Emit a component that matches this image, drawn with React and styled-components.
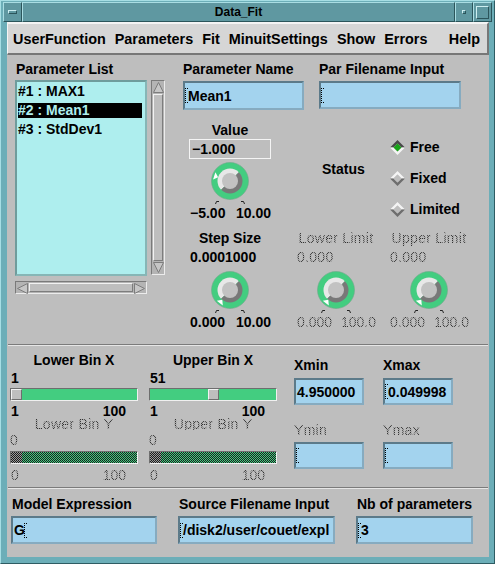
import React from 'react';
import styled, { createGlobalStyle, css } from 'styled-components';

const GRAY = '#bebebe';
const GREEN = '#43cd80';

const GlobalStyle = createGlobalStyle`
  html, body { margin: 0; padding: 0; background: ${GRAY}; }
  body { font-family: "Liberation Sans", Arial, sans-serif; color: #000; }
  * { box-sizing: border-box; }
`;

const bevel = (light, dark) => css`
  border-top: 1px solid ${light};
  border-left: 1px solid ${light};
  border-right: 1px solid ${dark};
  border-bottom: 1px solid ${dark};
`;

const Window = styled.div`
  width: 495px;
  height: 564px;
  display: flex;
  flex-direction: column;
  background: #6caeb8;
  ${bevel('#a6dee4', '#2e5c63')}
  padding: 1px 5px 6px 6px;
`;

const TitleBar = styled.div`
  display: flex;
  height: 20px;
  margin: 0 -3px 0 -4px;
`;

const FrameButton = styled.div`
  width: ${p => p.$w}px;
  height: 20px;
  display: flex;
  align-items: center;
  justify-content: center;
  background: #5f98a1;
  ${bevel('#a9dde3', '#2b555b')}
`;

const Glyph = styled.span`
  display: block;
  width: ${p => p.$w}px;
  height: ${p => p.$h}px;
  ${bevel('#cdeef1', '#2b555b')}
`;

const Title = styled.div`
  flex: 1;
  height: 20px;
  background: #5f98a1;
  ${bevel('#a9dde3', '#2b555b')}
  font-size: 12px;
  font-weight: bold;
  line-height: 18px;
  text-align: center;
`;

const Body = styled.div`
  flex: 1;
  display: flex;
  flex-direction: column;
  background: ${GRAY};
`;

const MenuBar = styled.div`
  height: 33px;
  display: flex;
  align-items: center;
  gap: 9px;
  padding: 0 7px 0 5px;
  background: #d6d6d6;
  border-top: 2px solid #f4f4f4;
  border-left: 1px solid #f4f4f4;
  border-bottom: 2px solid #777;
  border-right: 2px solid #777;
`;

const MenuItem = styled.span`
  font-size: 14.4px;
  font-weight: bold;
  margin-left: ${p => (p.$push ? 'auto' : '0')};
`;

const Section = styled.div`
  display: flex;
  height: ${p => p.$h}px;
  padding: ${p => p.$pad};
  ${p => p.$sep && css`
    border-bottom: 1px solid #7b7b7b;
    box-shadow: 0 1px 0 #e6e6e6;
    margin: 0 1px 1px;
  `}
`;

const stipple = css`
  font-weight: normal;
  color: transparent;
  background: repeating-conic-gradient(#333 0 25%, #a8a8a8 0 50%) 0 0 / 2px 2px;
  -webkit-background-clip: text;
  background-clip: text;
`;

const Label = styled.div`
  font-size: 14px;
  font-weight: bold;
  line-height: ${p => p.$lh || 16}px;
  text-align: ${p => p.$align || 'left'};
  margin-top: ${p => p.$mt || 0}px;
  padding-left: ${p => p.$pl || 0}px;
  white-space: nowrap;
  ${p => p.$disabled && css`
    letter-spacing: 0.3px;
    ${stipple}
  `}
`;

/* ---------- parameter list ---------- */

const ListColumn = styled.div`
  width: 150px;
  display: flex;
  flex-direction: column;
`;

const ListRow = styled.div`
  display: flex;
  gap: 4px;
  margin-top: 3px;
`;

const ListBox = styled.div`
  width: 132px;
  height: 196px;
  padding-top: 2px;
  background: #aeeeee;
  border: 2px solid;
  border-color: #6f9c9c #86b6b6 #86b6b6 #6f9c9c;
`;

const ListItem = styled.div`
  height: 15px;
  line-height: 15px;
  margin: 0 3px 4px 1px;
  font-size: 14px;
  font-weight: bold;
  background: ${p => (p.$selected ? '#000' : 'transparent')};
  color: ${p => (p.$selected ? '#aeeeee' : '#000')};
`;

const ScrollBar = styled.div`
  display: flex;
  flex-direction: ${p => (p.$vertical ? 'column' : 'row')};
  width: ${p => (p.$vertical ? 14 : 132)}px;
  height: ${p => (p.$vertical ? 195 : 13)}px;
  margin-top: ${p => (p.$vertical ? 0 : 5)}px;
  padding: 1px;
  gap: 1px;
  background: #b4b4b4;
  ${bevel('#7a7a7a', '#ececec')}
`;

const ScrollThumb = styled.div`
  flex: 1;
  background: ${GRAY};
  ${bevel('#f2f2f2', '#7d7d7d')}
`;

const Arrow = ({ dir }) => {
  const pts = {
    up: '5.5,0.5 10.5,10.5 0.5,10.5',
    down: '0.5,0.5 10.5,0.5 5.5,10.5',
    left: '0.5,5.5 10.5,0.5 10.5,10.5',
    right: '0.5,0.5 10.5,5.5 0.5,10.5',
  }[dir];
  return (
    <svg width="11" height="11" viewBox="0 0 11 11" style={{ flex: 'none' }}>
      <polygon points={pts} fill="#c6c6c6" stroke="#7d7d7d" strokeWidth="1" />
    </svg>
  );
};

/* ---------- editor ---------- */

const EditorColumn = styled.div`
  display: flex;
  flex-direction: column;
  margin-left: 18px;
`;

const FieldRow = styled.div`
  display: flex;
  gap: ${p => p.$gap}px;
`;

const FieldGroup = styled.div`
  display: flex;
  flex-direction: column;
`;

const Field = styled.div`
  width: ${p => p.$w}px;
  height: ${p => p.$h}px;
  margin-top: ${p => p.$mt}px;
  display: flex;
  align-items: center;
  padding-left: 1px;
  background: #a3d3ee;
  border: 2px solid;
  border-color: #5c7a89 #86abc0 #86abc0 #5c7a89;
  font-size: 14px;
  font-weight: bold;
  white-space: nowrap;
  overflow: hidden;
`;

const Caret = styled.span`
  flex: none;
  display: inline-block;
  width: 3px;
  height: 15px;
  margin-right: -1px;
  border-left: 1px dotted #000;
  border-top: 1px dotted #000;
  border-bottom: 1px dotted #000;
  transform: translateX(-1px);
`;

const DialRow = styled.div`
  display: flex;
  margin-top: ${p => p.$mt}px;
  padding-left: 6px;
`;

const DialBlockBox = styled.div`
  width: ${p => p.$w}px;
  margin-left: ${p => p.$ml}px;
  display: flex;
  flex-direction: column;
`;

const ValueBox = styled.div`
  height: 20px;
  margin-top: 1px;
  padding-left: 2px;
  border: 1px solid #f4f4f4;
  font-size: 14px;
  font-weight: bold;
  line-height: 18px;
`;

const DialHolder = styled.div`
  display: flex;
  justify-content: center;
  margin-top: ${p => p.$mt}px;
`;

const Range = styled.div`
  display: flex;
  justify-content: space-between;
  width: ${p => p.$w}px;
  margin-top: ${p => p.$mt}px;
  padding-left: 1px;
  font-size: 14px;
  font-weight: bold;
  line-height: ${p => p.$lh}px;
  ${p => p.$disabled && stipple}
`;

function Dial({ angle }) {
  const c = 19;
  const a = (angle * Math.PI) / 180;
  const pt = (r, da) => {
    const t = a + (da * Math.PI) / 180;
    return `${(c + Math.cos(t) * r).toFixed(2)},${(c + Math.sin(t) * r).toFixed(2)}`;
  };
  const R = 12.5;
  const d = R * Math.SQRT1_2;
  return (
    <svg width="38" height="42" viewBox="0 0 38 42">
      <circle cx={c} cy={c} r="18.5" fill={GREEN} stroke="#6fa98a" strokeWidth="0.6" />
      <path d={`M${c - d} ${c + d} A${R} ${R} 0 0 1 ${c + d} ${c - d} Z`} fill="#e8e8e8" />
      <path d={`M${c + d} ${c - d} A${R} ${R} 0 0 1 ${c - d} ${c + d} Z`} fill="#787878" />
      <circle cx={c} cy={c} r="8" fill="#c2c2c2" />
      <polygon points={`${pt(12.5, 0)} ${pt(17, -13)} ${pt(17, 13)}`} fill="#fff" />
      <polyline points="4.5,42 5.5,39.5 8,39.5" fill="none" stroke="#222" strokeWidth="1" />
      <polyline points="30,39.5 32.5,39.5 33.5,42" fill="none" stroke="#222" strokeWidth="1" />
    </svg>
  );
}

function DialBlock({ title, value, boxed, min, max, angle, disabled, w = 82, ml = 0, valueGap, dialGap }) {
  return (
    <DialBlockBox $w={w} $ml={ml}>
      <Label $align="center" $disabled={disabled}>{title}</Label>
      {boxed ? (
        <ValueBox>{value}</ValueBox>
      ) : (
        <Label $mt={valueGap} $pl={1} $disabled={disabled}>{value}</Label>
      )}
      <DialHolder $mt={dialGap}>
        <Dial angle={angle} />
      </DialHolder>
      <Range $w={w} $mt={1} $lh={16} $disabled={disabled}>
        <span>{min}</span>
        <span>{max}</span>
      </Range>
    </DialBlockBox>
  );
}

const StatusLabel = styled(Label)`
  width: 68px;
  margin-left: 51px;
  margin-top: 39px;
`;

const RadioColumn = styled.div`
  display: flex;
  flex-direction: column;
  gap: 11px;
  margin-top: 15px;
`;

const RadioItem = styled.div`
  height: 20px;
  display: flex;
  align-items: center;
  gap: 5px;
  font-size: 14px;
  font-weight: bold;
`;

function Radio({ label, on }) {
  const hi = on ? '#4a4a4a' : '#f4f4f4';
  const lo = on ? '#f4f4f4' : '#6e6e6e';
  return (
    <RadioItem>
      <svg width="15" height="15" viewBox="0 0 15 15">
        <polygon points="0,7.5 7.5,0 15,7.5 11.5,7.5 7.5,3.5 3.5,7.5" fill={hi} />
        <polygon points="0,7.5 3.5,7.5 7.5,11.5 11.5,7.5 15,7.5 7.5,15" fill={lo} />
        <polygon points="7.5,3.5 11.5,7.5 7.5,11.5 3.5,7.5" fill={on ? '#19a419' : GRAY} />
      </svg>
      {label}
    </RadioItem>
  );
}

/* ---------- bins ---------- */

const SliderArea = styled.div`
  display: flex;
  gap: 11px;
`;

const SliderColumn = styled.div`
  width: 128px;
  display: flex;
  flex-direction: column;
`;

const checker = (a, b) => `repeating-conic-gradient(${a} 0 25%, ${b} 0 50%) 0 0 / 2px 2px`;

const Trough = styled.div`
  position: relative;
  width: 128px;
  height: 13px;
  margin-top: ${p => p.$mt}px;
  background: ${p => (p.$disabled ? checker('#1c1c1c', GREEN) : GREEN)};
  ${bevel('#6e6e6e', '#f0f0f0')}
`;

const Thumb = styled.div`
  position: absolute;
  top: 0;
  bottom: 0;
  width: 11px;
  background: ${p => (p.$disabled ? checker('#1c1c1c', '#9a9a9a') : GRAY)};
  ${p => !p.$disabled && bevel('#f2f2f2', '#6e6e6e')}
`;

function Slider({ value, disabled, mt }) {
  const left = Math.round((value / 99) * 115);
  return (
    <Trough $mt={mt} $disabled={disabled}>
      <Thumb $disabled={disabled} style={{ left }} />
    </Trough>
  );
}

function BinColumn({ xTitle, xValue, yTitle }) {
  return (
    <SliderColumn>
      <Label $align="center">{xTitle}</Label>
      <Label $mt={2} $pl={1}>{xValue}</Label>
      <Slider value={xValue - 1} mt={2} />
      <Range $w={116} $mt={5} $lh={11}>
        <span>1</span>
        <span>100</span>
      </Range>
      <Label $align="center" $lh={12} $mt={1} $disabled>{yTitle}</Label>
      <Label $mt={4} $lh={12} $disabled>0</Label>
      <Slider value={0} mt={5} disabled />
      <Range $w={116} $mt={5} $lh={12} $disabled>
        <span>0</span>
        <span>100</span>
      </Range>
    </SliderColumn>
  );
}

const XYGrid = styled.div`
  display: grid;
  grid-template-columns: 70px 70px;
  column-gap: 19px;
  align-content: start;
  margin: 5px 0 0 17px;
`;

const XYCell = styled.div`
  display: flex;
  flex-direction: column;
  margin-top: ${p => p.$mt}px;
`;

function XYField({ label, value, caret, disabled, mt }) {
  return (
    <XYCell $mt={mt}>
      <Label $disabled={disabled}>{label}</Label>
      <Field $w={70} $h={27} $mt={disabled ? 4 : 5}>
        {caret && <Caret />}
        {value}
      </Field>
    </XYCell>
  );
}

function LabeledField({ label, value, w, caretAfter }) {
  return (
    <FieldGroup>
      <Label $pl={1}>{label}</Label>
      <Field $w={w} $h={28} $mt={4}>
        {!caretAfter && <Caret />}
        {value}
        {caretAfter && <Caret />}
      </Field>
    </FieldGroup>
  );
}

export default function App() {
  return (
    <>
      <GlobalStyle />
      <Window>
        <TitleBar>
          <FrameButton $w={19}><Glyph $w={9} $h={4} /></FrameButton>
          <Title>Data_Fit</Title>
          <FrameButton $w={18}><Glyph $w={4} $h={4} /></FrameButton>
          <FrameButton $w={19}><Glyph $w={13} $h={13} /></FrameButton>
        </TitleBar>
        <Body>
          <MenuBar>
            <MenuItem>UserFunction</MenuItem>
            <MenuItem>Parameters</MenuItem>
            <MenuItem>Fit</MenuItem>
            <MenuItem>MinuitSettings</MenuItem>
            <MenuItem>Show</MenuItem>
            <MenuItem>Errors</MenuItem>
            <MenuItem $push>Help</MenuItem>
          </MenuBar>

          <Section $h={290} $pad="6px 0 0 7px" $sep>
            <ListColumn>
              <Label $pl={1}>Parameter List</Label>
              <ListRow>
                <ListBox>
                  <ListItem>#1 : MAX1</ListItem>
                  <ListItem $selected>#2 : Mean1</ListItem>
                  <ListItem>#3 : StdDev1</ListItem>
                </ListBox>
                <ScrollBar $vertical>
                  <Arrow dir="up" />
                  <ScrollThumb />
                  <Arrow dir="down" />
                </ScrollBar>
              </ListRow>
              <ScrollBar>
                <Arrow dir="left" />
                <ScrollThumb />
                <Arrow dir="right" />
              </ScrollBar>
            </ListColumn>

            <EditorColumn>
              <FieldRow $gap={15}>
                <FieldGroup>
                  <Label>Parameter Name</Label>
                  <Field $w={121} $h={29} $mt={4}><Caret />Mean1</Field>
                </FieldGroup>
                <FieldGroup>
                  <Label>Par Filename Input</Label>
                  <Field $w={142} $h={28} $mt={4}><Caret /></Field>
                </FieldGroup>
              </FieldRow>

              <DialRow $mt={12}>
                <DialBlock title="Value" value="−1.000" boxed min="−5.00" max="10.00" angle={198} dialGap={3} />
                <StatusLabel>Status</StatusLabel>
                <RadioColumn>
                  <Radio label="Free" on />
                  <Radio label="Fixed" />
                  <Radio label="Limited" />
                </RadioColumn>
              </DialRow>

              <DialRow $mt={9}>
                <DialBlock title="Step Size" value="0.0001000" min="0.000" max="10.00" angle={128} valueGap={3} dialGap={6} />
                <DialBlock title="Lower Limit" value="0.000" min="0.000" max="100.0" angle={128} valueGap={3} dialGap={6} disabled w={80} ml={25} />
                <DialBlock title="Upper Limit" value="0.000" min="0.000" max="100.0" angle={128} valueGap={3} dialGap={6} disabled w={80} ml={13} />
              </DialRow>
            </EditorColumn>
          </Section>

          <Section $h={142} $pad="6px 0 0 2px" $sep>
            <SliderArea>
              <BinColumn xTitle="Lower Bin X" xValue={1} yTitle="Lower Bin Y" />
              <BinColumn xTitle="Upper Bin X" xValue={51} yTitle="Upper Bin Y" />
            </SliderArea>
            <XYGrid>
              <XYField label="Xmin" value="4.950000" mt={0} />
              <XYField label="Xmax" value="0.049998" caret mt={0} />
              <XYField label="Ymin" caret disabled mt={17} />
              <XYField label="Ymax" caret disabled mt={17} />
            </XYGrid>
          </Section>

          <Section $h={66} $pad="7px 0 0 4px">
            <FieldRow $gap={21}>
              <LabeledField label="Model Expression" value="G" w={146} caretAfter />
              <LabeledField label="Source Filename Input" value="/disk2/user/couet/expl" w={157} />
              <LabeledField label="Nb of parameters" value="3" w={117} />
            </FieldRow>
          </Section>
        </Body>
      </Window>
    </>
  );
}
